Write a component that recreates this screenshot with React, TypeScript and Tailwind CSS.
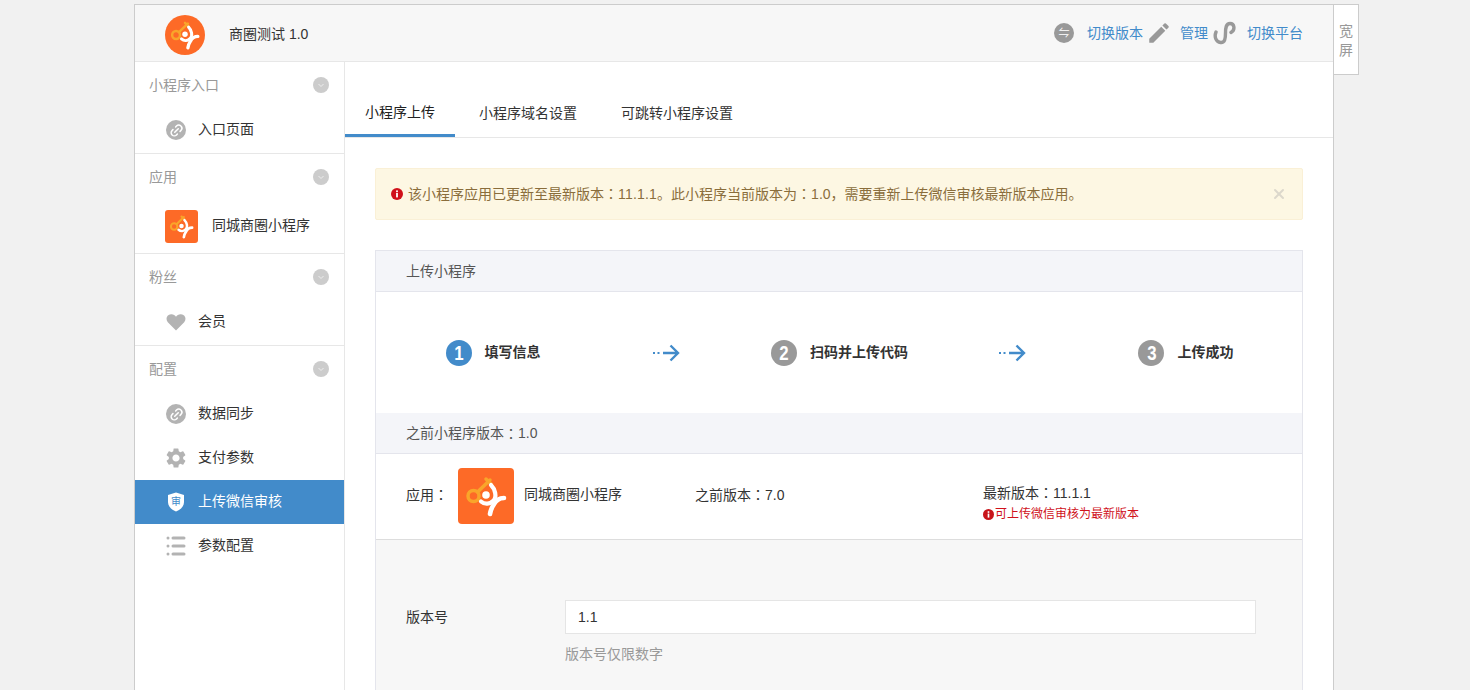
import { Link2, X } from 'lucide-react';
import { MdEdit, MdSettings } from 'react-icons/md';

const font = "[font-family:'Liberation_Sans','Noto_Sans_CJK_SC',sans-serif]";

function Logo({ size, rounded, className = '' }: { size: number; rounded: string; className?: string }) {
  return (
    <svg width={size} height={size} viewBox="0 0 56 56" className={`shrink-0 bg-[#fd6a27] ${rounded} ${className}`}>
      <circle cx="15.5" cy="28" r="5.5" fill="none" stroke="#f9a52a" strokeWidth="3.5" />
      <path d="M19.5 24 L32 12 M28 11 L33 16" fill="none" stroke="#f9a52a" strokeWidth="3.5" strokeLinecap="round" />
      <circle cx="28" cy="27" r="3.8" fill="#fff" />
      <path d="M23 33.5 C27 37 32 36 35 33 C39.5 29 37 21 33 17" fill="none" stroke="#fff" strokeWidth="4.2" strokeLinecap="round" />
      <path d="M46 30 C41 30 37.5 33 35.5 37 C33.5 40 32.5 43 32 46" fill="none" stroke="#fff" strokeWidth="4.6" strokeLinecap="round" />
    </svg>
  );
}

function LinkCircle() {
  return (
    <span className="flex h-5 w-5 shrink-0 items-center justify-center rounded-full bg-[#b3b3b3]">
      <Link2 size={15} strokeWidth={2.4} className="-rotate-45 text-white" />
    </span>
  );
}

function Heart() {
  return (
    <svg width="20" height="20" viewBox="0 0 20 20" className="shrink-0">
      <path d="M10 18.5 L1.8 10.2 C-0.6 7.4 0.3 2.6 5 2.2 C7.2 2 9 3.2 10 4.8 C11 3.2 12.8 2 15 2.2 C19.7 2.6 20.6 7.4 18.2 10.2 Z" fill="#b3b3b3" />
    </svg>
  );
}

function ListIcon() {
  return (
    <svg width="20" height="20" viewBox="0 0 20 20" className="shrink-0" fill="#b3b3b3">
      <rect x="0.5" y="0.5" width="3" height="3" rx="1.5" />
      <rect x="5.5" y="0.5" width="14" height="3" rx="1.5" />
      <rect x="0.5" y="8.5" width="3" height="3" rx="1.5" />
      <rect x="5.5" y="8.5" width="14" height="3" rx="1.5" />
      <rect x="0.5" y="16.5" width="3" height="3" rx="1.5" />
      <rect x="5.5" y="16.5" width="14" height="3" rx="1.5" />
    </svg>
  );
}

function ShieldIcon() {
  return (
    <span className="relative flex h-5 w-5 shrink-0 items-center justify-center">
      <svg width="18" height="20" viewBox="0 0 18 20" className="absolute">
        <path d="M9 0.5 L17 3 V10 C17 14.5 13.5 17.8 9 19.5 C4.5 17.8 1 14.5 1 10 V3 Z" fill="#fff" />
      </svg>
      <span className="relative text-[10px] leading-none text-[#428bca]">审</span>
    </span>
  );
}

function Collapse() {
  return (
    <span className="flex h-4 w-4 items-center justify-center rounded-full bg-[#ccc]">
      <svg width="8" height="8" viewBox="0 0 8 8">
        <path d="M1.5 3 L4 5.5 L6.5 3" fill="none" stroke="#eee" strokeWidth="1" />
      </svg>
    </span>
  );
}

function Alert({ size, color }: { size: number; color: string }) {
  return (
    <svg width={size} height={size} viewBox="0 0 12 12" className="shrink-0">
      <circle cx="6" cy="6" r="6" fill={color} />
      <rect x="5.1" y="2.4" width="1.8" height="1.8" fill="#fff" />
      <rect x="5.1" y="5" width="1.8" height="4.4" fill="#fff" />
    </svg>
  );
}

// centred full-width colon, as the original page's font draws it
function Colon() {
  return <span className="[font-family:'Noto_Sans_CJK_TC',sans-serif]">：</span>;
}

function GroupTitle({ title }: { title: string }) {
  return (
    <div className="flex h-[46px] items-center justify-between pl-[14px] pr-[15px] text-[#999]">
      <span>{title}</span>
      <Collapse />
    </div>
  );
}

function NavItem({ icon, label, active }: { icon: React.ReactNode; label: string; active?: boolean }) {
  return (
    <div className={`flex h-11 items-center gap-3 pl-[31px] ${active ? 'bg-[#428bca] text-white' : 'text-[#333]'}`}>
      {icon}
      <span className="-mt-0.5">{label}</span>
    </div>
  );
}

function Step({ n, label, active }: { n: number; label: string; active?: boolean }) {
  return (
    <div className="flex items-center justify-center gap-[13px] pl-px">
      <span className={`flex h-[26px] w-[26px] items-center justify-center rounded-full text-[21px] font-bold text-white ${active ? 'bg-[#428bca]' : 'bg-[#999]'}`}>
        <span className="inline-block scale-x-[0.8]">{n}</span>
      </span>
      <span className="pb-[2px] font-bold text-[#333]">{label}</span>
    </div>
  );
}

function Arrow() {
  return (
    <div className="flex justify-center">
      <svg width="28" height="18" viewBox="0 0 28 18">
        <rect x="1" y="8" width="2" height="2" fill="#428bca" />
        <rect x="5.5" y="8" width="2" height="2" fill="#428bca" />
        <path d="M11 9 H26 M18.5 1.5 L26 9 L18.5 16.5" fill="none" stroke="#428bca" strokeWidth="2.4" />
      </svg>
    </div>
  );
}

export default function App() {
  return (
    <div className={`h-[690px] overflow-hidden bg-[#f1f1f1] text-sm ${font}`}>
      <div className="ml-[134px] mt-1 flex items-start">
        <div className="h-[686px] w-[1200px] shrink-0 overflow-hidden border-x border-t border-[#ccc] bg-white">
          {/* top bar */}
          <header className="flex h-[57px] items-center border-b border-[#e7e7e7] bg-[#f7f7f7] pl-[30px] pr-[30px]">
            <Logo size={40} rounded="rounded-full" className="mt-1" />
            <span className="ml-6 mt-0.5 text-[#333]">商圈测试 1.0</span>
            <div className="ml-auto flex items-center text-[#428bca]">
              <span className="flex h-5 w-5 items-center justify-center rounded-full bg-[#999] text-[11px] leading-none text-white">⇋</span>
              <span className="ml-[13px]">切换版本</span>
              <MdEdit size={26} className="ml-[3px] text-[#999]" />
              <span className="ml-2">管理</span>
              <svg width="24" height="24" viewBox="0 0 24 24" className="ml-[5px]">
                <path d="M3 11 C1 16 3 21 7.5 21.5 C12 22 12.5 17 12.5 12 C12.5 7 13 2.5 17 2.5 C21.5 2.5 22.5 9 18 11.5" fill="none" stroke="#999" strokeWidth="3.4" strokeLinecap="round" />
              </svg>
              <span className="ml-2.5">切换平台</span>
            </div>
          </header>

          <div className="flex h-[628px]">
            {/* sidebar */}
            <aside className="w-[210px] shrink-0 border-r border-[#e7e7e7]">
              <div className="h-[92px] border-b border-[#e7e7e7]">
                <GroupTitle title="小程序入口" />
                <NavItem icon={<LinkCircle />} label="入口页面" />
              </div>
              <div className="h-[100px] border-b border-[#e7e7e7]">
                <GroupTitle title="应用" />
                <div className="flex h-[50px] items-center gap-[14px] pl-[30px] text-[#333]">
                  <Logo size={33} rounded="rounded-[3px]" className="mt-0.5" />
                  <span>同城商圈小程序</span>
                </div>
              </div>
              <div className="h-[92px] border-b border-[#e7e7e7]">
                <GroupTitle title="粉丝" />
                <NavItem icon={<Heart />} label="会员" />
              </div>
              <GroupTitle title="配置" />
              <NavItem icon={<LinkCircle />} label="数据同步" />
              <NavItem icon={<MdSettings size={24} className="-mx-0.5 text-[#b3b3b3]" />} label="支付参数" />
              <NavItem icon={<ShieldIcon />} label="上传微信审核" active />
              <NavItem icon={<ListIcon />} label="参数配置" />
            </aside>

            {/* main */}
            <main className="flex-1">
              <nav className="flex h-[76px] items-end gap-1 border-b border-[#e7e7e7] text-[#333]">
                <div className="flex h-[46px] items-center border-b-[3px] border-[#428bca] px-5 pb-[2px] text-[#222]">小程序上传</div>
                <div className="flex h-[46px] items-center px-5 pb-[2px]">小程序域名设置</div>
                <div className="flex h-[46px] items-center px-5 pb-[2px]">可跳转小程序设置</div>
              </nav>

              <div className="px-[30px] pt-[30px]">
                <div className="flex h-[52px] items-center rounded-[2px] border border-[#faf0d6] bg-[#fdf7e3] pl-[15px] pr-[15px] text-[#8a6d3b]">
                  <Alert size={12} color="#d0111b" />
                  <span className="-mt-0.5 ml-[5px]">该小程序应用已更新至最新版本<Colon /><span className="tracking-[0.2px]">11.1.1</span>。此小程序当前版本为<Colon />1.0，需要重新上传微信审核最新版本应用。</span>
                  <X size={16} strokeWidth={3} className="ml-auto text-[#dcd8cc]" />
                </div>

                <section className="mt-[30px] border border-[#e4e5ec]">
                  <div className="flex h-[41px] items-center border-b border-[#e4e5ec] bg-[#f4f5f9] pb-px pl-[30px] text-[#555]">上传小程序</div>
                  <div className="mx-auto grid h-[121px] w-[866px] grid-cols-5 items-center">
                    <Step n={1} label="填写信息" active />
                    <Arrow />
                    <Step n={2} label="扫码并上传代码" />
                    <Arrow />
                    <Step n={3} label="上传成功" />
                  </div>
                  <div className="flex h-[41px] items-center border-b border-[#e4e5ec] bg-[#f4f5f9] pl-[30px] text-[#555]">之前小程序版本<Colon />1.0</div>
                  <div className="flex h-[86px] items-center border-b border-[#ddd] pb-px pl-[30px] text-[#333]">
                    <span className="-mt-1 w-[52px]">应用<Colon /></span>
                    <Logo size={56} rounded="rounded-[4px]" />
                    <span className="-mt-1 ml-2.5 w-[171px]">同城商圈小程序</span>
                    <span className="-mt-1 w-[288px]">之前版本<Colon />7.0</span>
                    <div className="pt-3">
                      <div className="leading-5">最新版本<Colon />11.1.1</div>
                      <div className="mt-[3px] flex items-center text-xs leading-4 text-[#d0111b]">
                        <Alert size={11} color="#c8141a" />
                        <span className="ml-px">可上传微信审核为最新版本</span>
                      </div>
                    </div>
                  </div>
                  <div className="h-[200px] bg-[#f7f7f7] pl-[30px] pt-[60px]">
                    <div className="flex items-center">
                      <span className="w-[159px] text-[#333]">版本号</span>
                      <div className="flex h-[34px] w-[691px] items-center border border-[#e5e5e5] bg-white pl-3 text-[#333]">1.1</div>
                    </div>
                    <div className="ml-[159px] mt-2.5 text-[#999]">版本号仅限数字</div>
                  </div>
                </section>
              </div>
            </main>
          </div>
        </div>

        {/* wide-screen toggle */}
        <div className="flex h-[71px] w-[25px] shrink-0 flex-col items-center justify-center border border-l-0 border-[#ccc] bg-white pt-[3px] leading-[19px] text-[#999]">
          <span>宽</span>
          <span>屏</span>
        </div>
      </div>
    </div>
  );
}
